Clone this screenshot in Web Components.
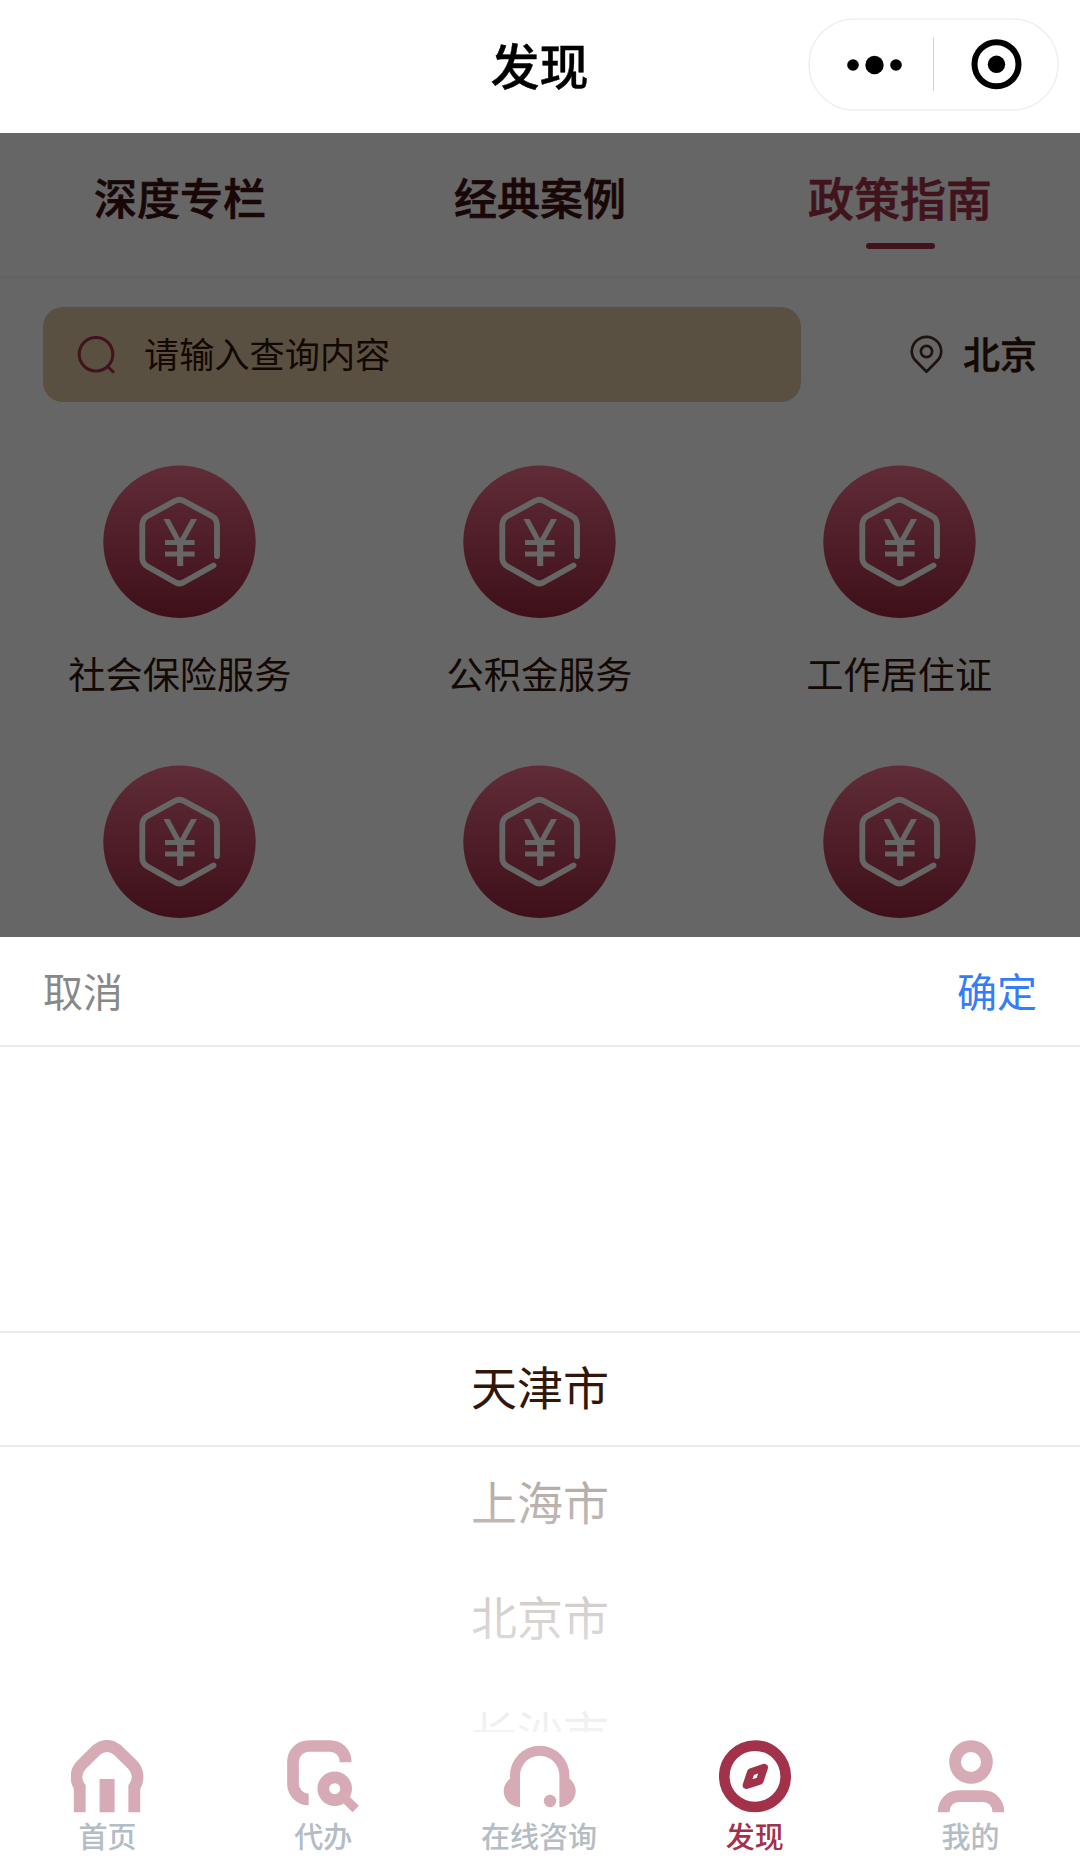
<!DOCTYPE html>
<html lang="zh-CN">
<head>
<meta charset="utf-8">
<title>发现</title>
<style>
    body {
        margin: 0;
        width: 1080px;
        height: 1870px;
        overflow: hidden;
        background: #fff;
        color: #331608;
        font-family: "Noto Sans CJK SC", sans-serif;
    }
</style>
</head>
<body>
<discover-page></discover-page>

<script>
class NavBar extends HTMLElement {
    constructor() {
        super();
        const shadowRoot = this.attachShadow({ mode: 'open' });
        shadowRoot.innerHTML = `
        <style>
            :host {
                display: grid;
                grid-template-columns: 1fr auto 1fr;
                align-items: center;
                height: 133px;
                box-sizing: border-box;
                padding: 0 21px 5px;
                background: #fff;
                color: #000;
            }

            .title {
                grid-column: 2;
                margin: 0 1px 1px 0;
                font-size: 49px;
                font-weight: 500;
                line-height: 70px;
                -webkit-text-stroke: .4px currentColor;
            }

            .capsule {
                justify-self: end;
                display: block;
                width: 251px;
                height: 93px;
            }
        </style>
        <div class="title"><slot></slot></div>
        <svg class="capsule" viewBox="0 0 251 93">
            <rect x="1" y="1" width="249" height="91" rx="45.5" fill="#fff" stroke="#efefef" stroke-width="1.5"/>
            <circle cx="45" cy="47" r="5.8"/>
            <circle cx="66.5" cy="47" r="9.2"/>
            <circle cx="88" cy="47" r="5.8"/>
            <path d="M125.5 19.5v53.5" stroke="#d2d2d2" stroke-width="1"/>
            <circle cx="188.5" cy="46.3" r="22" fill="none" stroke="#000" stroke-width="6"/>
            <circle cx="188.5" cy="46.3" r="8.7"/>
        </svg>
        `
    }
}

class TopTab extends HTMLElement {
    constructor() {
        super();
        const shadowRoot = this.attachShadow({ mode: 'open' });
        shadowRoot.innerHTML = `
        <style>
            :host {
                flex: 1;
                display: flex;
                flex-direction: column;
                align-items: center;
                color: #401010;
                font-size: 43px;
                font-weight: 500;
                line-height: 66px;
                -webkit-text-stroke: .7px currentColor;
            }

            .label {
                margin-top: 30px;
                white-space: nowrap;
            }

            .bar {
                width: 69px;
                height: 6px;
                margin-top: 14px;
                border-radius: 3px;
            }

            :host([active]) {
                color: #a2314a;
                font-size: 46px;
            }

            :host([active]) .bar {
                background: #a2314a;
            }
        </style>
        <span class="label"><slot></slot></span>
        <i class="bar"></i>
        `
    }
}

class SearchRow extends HTMLElement {
    constructor() {
        super();
        const shadowRoot = this.attachShadow({ mode: 'open' });
        shadowRoot.innerHTML = `
        <style>
            :host {
                display: flex;
                align-items: center;
                justify-content: space-between;
                padding: 29px 43px 0;
            }

            .box {
                display: flex;
                align-items: center;
                width: 758px;
                height: 95px;
                box-sizing: border-box;
                padding-left: 33px;
                border-radius: 20px;
                background: #dfc8a3;
                font-size: 35.2px;
            }

            .box svg {
                margin-right: 28px;
            }

            .text {
                margin-bottom: 4px;
            }

            .city {
                display: flex;
                align-items: center;
                font-size: 37px;
                font-weight: 500;
            }

            .city svg {
                margin-right: 20px;
            }

            .name {
                margin-bottom: 3px;
                -webkit-text-stroke: .5px currentColor;
            }
        </style>
        <div class="box">
            <svg width="40" height="40" viewBox="0 0 40 40" fill="none" stroke="#a2314a" stroke-width="3">
                <circle cx="20" cy="19.3" r="16.8"/>
                <path d="M31.7 31.5l6.3 6.2"/>
            </svg>
            <span class="text"><slot></slot></span>
        </div>
        <div class="city">
            <svg width="33" height="39" viewBox="0 0 33 39" fill="none" stroke="#4b3022" stroke-width="2.7">
                <path d="M16.5 36.8L6 26C2.9 23.1 1.8 20 1.8 16.5a14.7 14.7 0 0 1 29.4 0C31.2 20 30 23.1 27 26Z" stroke-linejoin="round"/>
                <circle cx="16.5" cy="16.5" r="5.6"/>
            </svg>
            <span class="name"><slot name="city"></slot></span>
        </div>
        `
    }
}

class ServiceItem extends HTMLElement {
    constructor() {
        super();
        const shadowRoot = this.attachShadow({ mode: 'open' });
        shadowRoot.innerHTML = `
        <style>
            :host {
                display: flex;
                flex-direction: column;
                align-items: center;
                height: 300px;
                font-size: 37.2px;
                line-height: 54px;
            }

            svg {
                display: block;
                margin-bottom: 28px;
            }
        </style>
        <svg width="153" height="153" viewBox="0 0 153 153" fill="none" stroke="#fff">
            <defs>
                <linearGradient id="disc" x1="0" y1="0" x2="0" y2="1">
                    <stop offset="0" stop-color="#ee6e8b"/>
                    <stop offset="1" stop-color="#9b2841"/>
                </linearGradient>
            </defs>
            <circle cx="76.5" cy="76.8" r="76.2" fill="url(#disc)" stroke="none"/>
            <path d="M114 91V60Q114 54 108.7 51L81 36Q76.500 33.500 71.800 36L44.500 51Q39.300 54 39.300 60V93Q39.300 98.500 44.500 101.500L71.800 117Q76.500 120 81 117L110.500 100.500" stroke-width="5.800" stroke-linecap="round" stroke-linejoin="round"/>
            <g fill="#fff" stroke="none">
                <path d="M60.500 54H66.500L77.100 73.500L88 54H94L80.200 79V101H74.100V79Z"/>
                <path d="M62 75H91.600V80H62ZM62 86.500H91.600V91.500H62Z"/>
            </g>
        </svg>
        <slot></slot>
        `
    }
}

class CityPicker extends HTMLElement {
    constructor() {
        super();
        const shadowRoot = this.attachShadow({ mode: 'open' });
        shadowRoot.innerHTML = `
        <style>
            :host {
                display: block;
                background: #fff;
            }

            .head {
                display: flex;
                justify-content: space-between;
                align-items: center;
                height: 110px;
                box-sizing: border-box;
                padding: 0 43px 2px;
                border-bottom: 2px solid #e9e9e9;
                font-size: 40px;
            }

            .cancel {
                color: #888;
            }

            .confirm {
                color: #347cf9;
            }

            .view {
                position: relative;
                height: 685px;
                box-sizing: border-box;
                padding-top: 281px;
                overflow: hidden;
                text-align: center;
                font-size: 46px;
                line-height: 115px;
            }

            /* fades the rows above and below the selected one */
            .mask {
                position: absolute;
                inset: 0;
                background:
                    linear-gradient(180deg, rgba(255, 255, 255, .95), rgba(255, 255, 255, .6)) top / 100% 285px no-repeat,
                    linear-gradient(0deg, rgba(255, 255, 255, .95), rgba(255, 255, 255, .6)) bottom / 100% 285px no-repeat;
            }

            .indicator {
                position: absolute;
                top: 284px;
                left: 0;
                right: 0;
                height: 116px;
                box-sizing: border-box;
                border: solid #e9e9e9;
                border-width: 2px 0;
            }
        </style>
        <div class="head">
            <span class="cancel">取消</span>
            <span class="confirm">确定</span>
        </div>
        <div class="view">
            <slot></slot>
            <div class="mask"></div>
            <div class="indicator"></div>
        </div>
        `
    }
}

class PickerOption extends HTMLElement {
    constructor() {
        super();
        const shadowRoot = this.attachShadow({ mode: 'open' });
        shadowRoot.innerHTML = `
        <style>
            :host {
                display: block;
                height: 115px;
            }
        </style>
        <slot></slot>
        `
    }
}

const TAB_ICONS = {
    home: `
        <path d="M8.7 72.3V47C4 40.5 4.3 31 10.5 24.8L25.5 10Q36 2 46.5 10L61.5 24.8C67.7 31 68 40.5 63.3 47V72.3" fill="none" stroke="currentColor" stroke-width="11.8"/>
        <path d="M28.6 39h15v33.3h-15z"/>`,
    agent: `
        <g fill="none" stroke="currentColor" stroke-width="11.7">
            <path d="M58.7 22.2C58.7 13 52 6 43 6H22C13 6 6 13 6 22V43.5C6 52.5 13 59.5 21.7 59.5"/>
            <circle cx="47.7" cy="48.7" r="11.4"/>
            <path d="M58 58.5L68.7 69" stroke-width="9"/>
        </g>`,
    service: `
        <path d="M17 67V35.5A19.7 19.8 0 0 1 56.4 35.5V67C65.7 67 72.7 59.5 72.7 51C72.7 46 70.2 42 66.4 38.5V35.4A29.7 29.7 0 0 0 7 35.4V38.5C3.2 42 .7 46 .7 51C.7 59.5 7.7 67 17 67Z"/>
        <circle cx="47" cy="61" r="6.2"/>`,
    discover: `
        <g fill="none" stroke="currentColor">
            <circle cx="36" cy="36.3" r="30.7" stroke-width="10.7"/>
            <path d="M45.200 27.500L31.900 32L27.500 45.200L40.800 40.800Z" stroke-width="7.600" stroke-linejoin="round"/>
        </g>`,
    mine: `
        <g fill="none" stroke="currentColor" stroke-width="11.8">
            <circle cx="36" cy="22" r="15.9"/>
            <path d="M8.6 72.3C8.6 63 15 56.2 24 56.2H48C57 56.2 63.4 63 63.4 72.3"/>
        </g>`
};

class TabItem extends HTMLElement {
    constructor() {
        super();
        const shadowRoot = this.attachShadow({ mode: 'open' });
        shadowRoot.innerHTML = `
        <style>
            :host {
                flex: 1;
                display: flex;
                flex-direction: column;
                align-items: center;
                color: #b4bcc6;
                font-size: 29px;
                line-height: 42px;
            }

            svg {
                display: block;
                margin-bottom: 1px;
                color: #d6abb5;
                fill: currentColor;
            }

            :host([active]), :host([active]) svg {
                color: #a2314a;
            }

            .label {
                margin-right: 1px;
                font-weight: 500;
            }
        </style>
        <svg width="73" height="73" viewBox="0 0 73 73">${TAB_ICONS[this.getAttribute('icon')]}</svg>
        <span class="label"><slot></slot></span>
        `
    }
}

class DiscoverPage extends HTMLElement {
    constructor() {
        super();
        const shadowRoot = this.attachShadow({ mode: 'open' });
        shadowRoot.innerHTML = `
        <style>
            :host {
                display: flex;
                flex-direction: column;
                height: 1870px;
            }

            .content {
                position: relative;
                height: 804px;
                overflow: hidden;
            }

            .content::after {
                content: "";
                position: absolute;
                inset: 0;
                background: rgba(0, 0, 0, .6);
            }

            .tabs {
                display: flex;
                height: 145px;
                box-sizing: border-box;
                border-bottom: 2px solid #f8f8f8;
            }

            .grid {
                display: grid;
                grid-template-columns: repeat(3, 1fr);
                margin-right: 1px;
                padding-top: 63px;
            }

            .tabbar {
                flex: 1;
                display: flex;
                padding-top: 8px;
                margin-right: 1px;
            }
        </style>
        <nav-bar>发现</nav-bar>
        <div class="content">
            <div class="tabs">
                <top-tab>深度专栏</top-tab>
                <top-tab>经典案例</top-tab>
                <top-tab active>政策指南</top-tab>
            </div>
            <search-row>请输入查询内容<span slot="city">北京</span></search-row>
            <div class="grid">
                <service-item>社会保险服务</service-item>
                <service-item>公积金服务</service-item>
                <service-item>工作居住证</service-item>
                <service-item></service-item>
                <service-item></service-item>
                <service-item></service-item>
            </div>
        </div>
        <city-picker>
            <picker-option>天津市</picker-option>
            <picker-option>上海市</picker-option>
            <picker-option>北京市</picker-option>
            <picker-option>长沙市</picker-option>
        </city-picker>
        <div class="tabbar">
            <tab-item icon="home">首页</tab-item>
            <tab-item icon="agent">代办</tab-item>
            <tab-item icon="service">在线咨询</tab-item>
            <tab-item icon="discover" active>发现</tab-item>
            <tab-item icon="mine">我的</tab-item>
        </div>
        `
    }
}

customElements.define('nav-bar', NavBar);
customElements.define('top-tab', TopTab);
customElements.define('search-row', SearchRow);
customElements.define('service-item', ServiceItem);
customElements.define('city-picker', CityPicker);
customElements.define('picker-option', PickerOption);
customElements.define('tab-item', TabItem);
customElements.define('discover-page', DiscoverPage);
</script>
</body>
</html>
